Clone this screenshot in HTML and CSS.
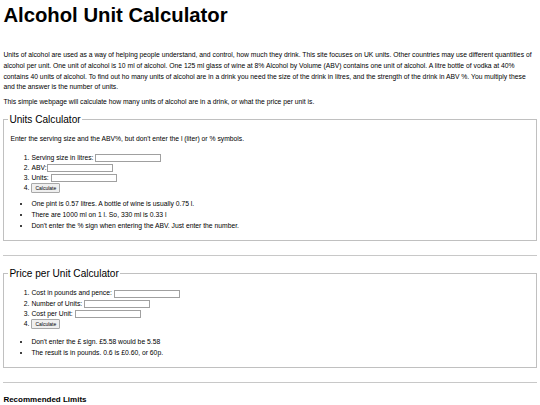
FILE: index.html
```html
<!DOCTYPE html>
<html>
<head>
<meta charset="utf-8">
<link rel="stylesheet" href="styles.css">
</head>
<body>
<h1 class="title">Alcohol Unit Calculator</h1>
<p class="intro">Units of alcohol are used as a way of helping people understand, and control, how much they drink. This site focuses on UK units. Other countries may use different quantities of alcohol per unit. One unit of alcohol is 10 ml of alcohol. One 125 ml glass of wine at 8% Alcohol by Volume (ABV) contains one unit of alcohol. A litre bottle of vodka at 40% contains 40 units of alcohol. To find out ho many units of alcohol are in a drink you need the size of the drink in litres, and the strength of the drink in ABV %. You multiply these and the answer is the number of units.</p>
<p class="intro">This simple webpage will calculate how many units of alcohol are in a drink, or what the price per unit is.</p>
<fieldset class="calc">
<legend class="calc-title">Units Calculator</legend>
<p class="note">Enter the serving size and the ABV%, but don't enter the l (liter) or % symbols.</p>
<ol class="steps">
<li>Serving size in litres: <input class="field" type="text"></li>
<li>ABV:<input class="field" type="text"></li>
<li>Units: <input class="field" type="text"></li>
<li><button class="btn" type="button">Calculate</button></li>
</ol>
<ul class="tips">
<li>One pint is 0.57 litres. A bottle of wine is usually 0.75 l.</li>
<li>There are 1000 ml on 1 l. So, 330 ml is 0.33 l</li>
<li>Don't enter the % sign when entering the ABV. Just enter the number.</li>
</ul>
</fieldset>
<hr class="rule">
<fieldset class="calc">
<legend class="calc-title">Price per Unit Calculator</legend>
<ol class="steps steps-top">
<li>Cost in pounds and pence: <input class="field" type="text"></li>
<li>Number of Units: <input class="field" type="text"></li>
<li>Cost per Unit: <input class="field" type="text"></li>
<li><button class="btn" type="button">Calculate</button></li>
</ol>
<ul class="tips tips-gap">
<li>Don't enter the £ sign. £5.58 would be 5.58</li>
<li>The result is in pounds. 0.6 is £0.60, or 60p.</li>
</ul>
</fieldset>
<hr class="rule">
<h3 class="sub">Recommended Limits</h3>
</body>
</html>
```
FILE: styles.css
```css
html, body {
  margin: 0;
  padding: 0;
  background: #fff;
}
body {
  padding: 0 3.4px;
  font-family: "Liberation Sans", Arial, sans-serif;
  font-size: 6.78px;
  color: #000;
}
.title {
  font-size: 20.3px;
  font-weight: bold;
  margin: 4px 0 0;
  line-height: 23px;
}
.intro {
  margin: 23px 0 0;
  line-height: 10.8px;
}
.intro + .intro {
  margin-top: 4px;
}
.calc {
  margin: 6px 0 0;
  padding: 2px 6px 9px;
  border: 1px solid #c0c0c0;
  min-width: 0;
}
.calc-title {
  font-size: 10.1px;
  padding: 0 1px;
  margin-left: -2px;
}
.note {
  margin: 6px 0 9px;
  line-height: 11px;
}
.steps {
  margin: 0;
  padding-left: 21px;
}
.steps-top {
  margin-top: 7px;
}
.steps li {
  line-height: 10.1px;
}
.field {
  width: 62px;
  height: 6px;
  padding: 0 1px;
  border: 1px solid #a0a0a0;
  font-size: 6px;
  vertical-align: middle;
  margin: 0;
}
.btn {
  font-family: "Liberation Sans", Arial, sans-serif;
  font-size: 5px;
  padding: 1px 3px;
  border: 1px solid #a8a8a8;
  border-radius: 1px;
  background: #efefef;
  vertical-align: middle;
}
.tips {
  margin: 5px 0 0;
  padding-left: 21px;
  list-style: disc;
}
.tips-gap {
  margin-top: 7px;
}
.tips li {
  line-height: 11px;
}
.rule {
  margin: 14px 0 12px;
  border: 0;
  border-top: 1px solid #c8c8c8;
}
.sub {
  font-size: 8px;
  font-weight: bold;
  margin: 12px 0 0;
}
```
